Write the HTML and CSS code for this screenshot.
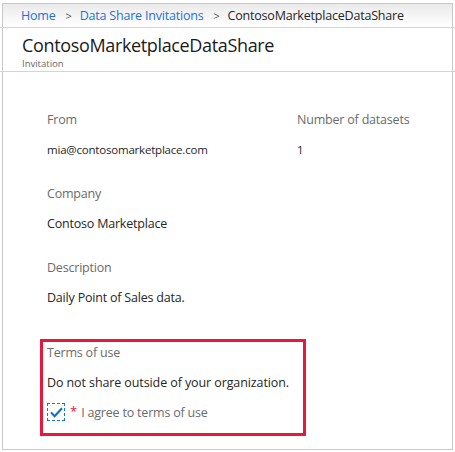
FILE: index.html
```html
<!DOCTYPE html>
<html>
<head>
<meta charset="utf-8">
<link rel="stylesheet" href="styles.css">
</head>
<body>
<div class="frame">
  <nav class="crumbs">
    <a class="crumb-link">Home</a>
    <span class="sep">&gt;</span>
    <a class="crumb-link">Data Share Invitations</a>
    <span class="sep">&gt;</span>
    <span class="crumb-current">ContosoMarketplaceDataShare</span>
  </nav>
  <div class="divider"></div>
  <header class="title-block">
    <h1 class="title">ContosoMarketplaceDataShare</h1>
    <div class="subtitle">Invitation</div>
  </header>
  <div class="divider"></div>
  <main class="content">
    <div class="row">
      <div class="field">
        <div class="label">From</div>
        <div class="value value-sm">mia@contosomarketplace.com</div>
      </div>
      <div class="field">
        <div class="label">Number of datasets</div>
        <div class="value value-sm">1</div>
      </div>
    </div>
    <div class="field">
      <div class="label">Company</div>
      <div class="value">Contoso Marketplace</div>
    </div>
    <div class="field">
      <div class="label">Description</div>
      <div class="value">Daily Point of Sales data.</div>
    </div>
    <section class="terms">
      <div class="label">Terms of use</div>
      <div class="value">Do not share outside of your organization.</div>
      <label class="agree">
        <span class="checkbox">
          <svg width="13" height="11" viewBox="0 0 13 11"><path d="M1 5.4 L4.6 9.2 L12 1.2" fill="none" stroke="#0f6fc6" stroke-width="2.1"/></svg>
        </span>
        <span class="req">*</span>
        <span class="agree-text">I agree to terms of use</span>
      </label>
    </section>
  </main>
</div>
</body>
</html>
```
FILE: styles.css
```css
html, body {
  margin: 0;
  padding: 0;
  background: #fff;
}
body {
  width: 455px;
  height: 452px;
  overflow: hidden;
  font-family: "Open Sans", "Noto Sans", sans-serif;
  color: #262626;
}
.frame {
  margin: 3px 0 0 2px;
  width: 449px;
  height: 445px;
  border: 1px solid #c8c8c8;
}
.crumbs {
  height: 23px;
  display: flex;
  align-items: center;
  padding-left: 18px;
  background: linear-gradient(#eaeaea, #ffffff);
  font-size: 12.5px;
  letter-spacing: -0.2px;
  white-space: nowrap;
}
.crumb-link {
  color: #1a73d9;
}
.sep {
  color: #555;
  margin: 0 8px 0 10px;
  font-size: 11px;
}
.crumb-current {
  color: #262626;
}
.divider {
  height: 1px;
  background: #d4d4d4;
  margin: 0 -4px 0 -3px;
}
.title-block {
  padding: 4px 0 0 19px;
  height: 39px;
}
.title {
  margin: 0;
  font-size: 18px;
  font-weight: 400;
  line-height: 26px;
  letter-spacing: -0.35px;
  color: #1a1a1a;
}
.subtitle {
  font-size: 9.5px;
  line-height: 12px;
  color: #666;
}
.content {
  padding: 38px 0 0 44px;
}
.row {
  display: grid;
  grid-template-columns: 250px auto;
}
.field {
  margin-bottom: 24px;
}
.label {
  font-size: 12.5px;
  line-height: 20px;
  color: #6b6b6b;
  letter-spacing: -0.2px;
}
.value {
  font-size: 12.5px;
  line-height: 20px;
  margin-top: 10px;
  color: #262626;
  letter-spacing: -0.2px;
}
.value-sm {
  font-size: 11.5px;
}
.terms {
  margin: 31px 0 0 -7px;
  width: 256px;
  height: 90px;
  border: 3px solid #e8173c;
  padding: 1px 0 0 4px;
}
.terms .value {
  margin-top: 10px;
  letter-spacing: -0.1px;
}
.agree {
  display: flex;
  align-items: center;
  margin-top: 10px;
  height: 18px;
}
.checkbox {
  width: 16px;
  height: 16px;
  border: 1px dashed #1a73d9;
  display: flex;
  align-items: center;
  justify-content: center;
  box-sizing: content-box;
}
.req {
  color: #e8173c;
  margin-left: 5px;
  font-size: 13px;
  align-self: flex-start;
  line-height: 16px;
}
.agree-text {
  margin-left: 4px;
  font-size: 12.5px;
  color: #6b6b6b;
  letter-spacing: -0.2px;
}
```
